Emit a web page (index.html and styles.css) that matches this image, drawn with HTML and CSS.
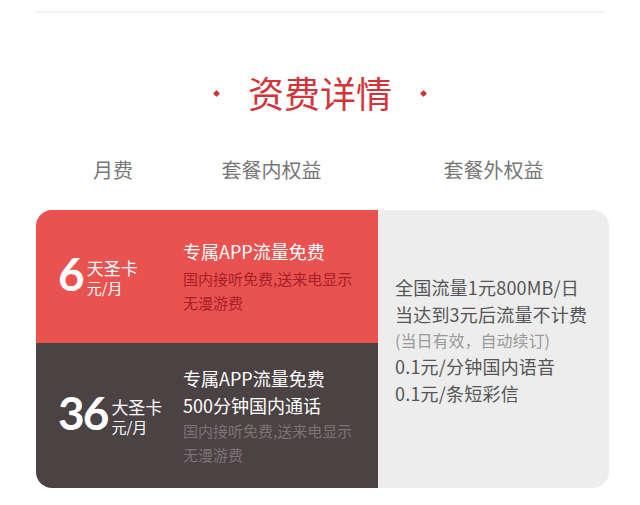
FILE: index.html
```html
<!DOCTYPE html>
<html lang="zh-CN">
<head>
<meta charset="utf-8">
<title>资费详情</title>
<link rel="stylesheet" href="styles.css">
</head>
<body>
<div class="page">
  <div class="rule"></div>
  <h2 class="title"><span class="dot"></span><span class="title-text">资费详情</span><span class="dot"></span></h2>
  <div class="heads">
    <div class="head h1">月费</div>
    <div class="head h2">套餐内权益</div>
    <div class="head h3">套餐外权益</div>
  </div>
  <div class="card">
    <div class="plans">
      <div class="plan plan-red">
        <div class="price">
          <span class="num">6</span>
          <span class="unit"><span class="name">天圣卡</span><span class="per">元/月</span></span>
        </div>
        <div class="perks">
          <div class="perk-main first">专属APP流量免费</div>
          <div class="perk-sub">国内接听免费,送来电显示</div>
          <div class="perk-sub">无漫游费</div>
        </div>
      </div>
      <div class="plan plan-dark">
        <div class="price">
          <span class="num">36</span>
          <span class="unit"><span class="name">大圣卡</span><span class="per">元/月</span></span>
        </div>
        <div class="perks">
          <div class="perk-main">专属APP流量免费</div>
          <div class="perk-main">500分钟国内通话</div>
          <div class="perk-sub">国内接听免费,送来电显示</div>
          <div class="perk-sub">无漫游费</div>
        </div>
      </div>
    </div>
    <div class="extra">
      <div class="extra-line">全国流量1元800MB/日</div>
      <div class="extra-line">当达到3元后流量不计费</div>
      <div class="extra-note">(当日有效，自动续订)</div>
      <div class="extra-line">0.1元/分钟国内语音</div>
      <div class="extra-line">0.1元/条短彩信</div>
    </div>
  </div>
</div>
</body>
</html>
```

FILE: styles.css
```css
* { box-sizing: border-box; }
html, body { margin: 0; padding: 0; background: #ffffff; }
body {
  font-family: "Noto Sans CJK SC", "Noto Sans", sans-serif;
  width: 640px;
  height: 505px;
  overflow: hidden;
}
.page { padding-top: 11px; }
.rule {
  height: 2px;
  margin: 0 36px;
  background: #f1f1f1;
}
.title {
  margin: 59px 0 0 0;
  display: flex;
  justify-content: center;
  align-items: center;
  gap: 29px;
  font-size: 36px;
  line-height: 40px;
  font-weight: 400;
  color: #d3343a;
}
.dot {
  width: 5px;
  height: 5px;
  background: #d3343a;
  border-radius: 1px;
  transform: rotate(45deg);
  margin-top: 3px;
}
.heads {
  margin: 46px 31px 0 36px;
  display: grid;
  grid-template-columns: 147px 195px 1fr;
  font-size: 20px;
  line-height: 24px;
  color: #777777;
}
.head { text-align: center; }
.h1 { padding-left: 7px; }
.h2 { padding-right: 18px; }
.card {
  margin: 28px 31px 0 36px;
  height: 278px;
  display: flex;
  border-radius: 16px;
  overflow: hidden;
}
.plans {
  width: 342px;
  display: flex;
  flex-direction: column;
}
.plan {
  display: flex;
  align-items: center;
}
.plan-red { height: 133px; background: #e9524f; }
.plan-dark { height: 145px; background: #4b4244; }
.price {
  width: 147px;
  padding-left: 22px;
  display: flex;
  align-items: center;
  color: #ffffff;
}
.num {
  font-family: "Lato", "Noto Sans", sans-serif;
  font-weight: 700;
  font-size: 46px;
  line-height: 44px;
  letter-spacing: -2px;
  margin-bottom: 6px;
  margin-right: 4px;
}
.unit {
  display: flex;
  flex-direction: column;
}
.name { font-size: 17px; line-height: 21px; }
.per { font-size: 15px; line-height: 19px; }
.perks { display: flex; flex-direction: column; }
.perk-main {
  font-size: 18px;
  line-height: 27px;
  color: #ffffff;
}
.perk-main.first { margin-bottom: 2px; }
.perk-sub {
  font-size: 15px;
  line-height: 24px;
}
.plan-red .perk-sub { color: #a61f29; }
.plan-dark .perk-sub { color: #7b7374; }
.extra {
  flex: 1;
  background: #ededed;
  padding: 64px 0 0 17px;
  color: #555555;
}
.extra-line {
  font-size: 18px;
  line-height: 27px;
  letter-spacing: 0.2px;
}
.extra-note {
  font-size: 16px;
  line-height: 25px;
  color: #999999;
}
```
